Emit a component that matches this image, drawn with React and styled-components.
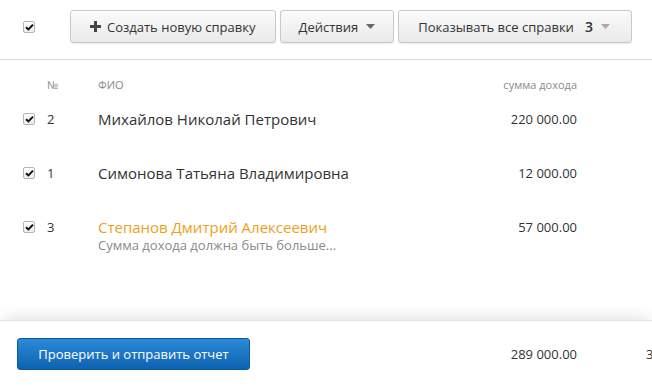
import React from "react";
import styled, { createGlobalStyle } from "styled-components";

const GlobalStyle = createGlobalStyle`
  html, body {
    margin: 0;
    padding: 0;
    background: #fff;
  }
  body {
    font-family: "Open Sans", "Noto Sans", sans-serif;
    color: #333;
  }
`;

const rows = [
  { id: 2, name: "Михайлов Николай Петрович", amount: "220 000.00" },
  { id: 1, name: "Симонова Татьяна Владимировна", amount: "12 000.00" },
  {
    id: 3,
    name: "Степанов Дмитрий Алексеевич",
    amount: "57 000.00",
    warning: "Сумма дохода должна быть больше..."
  }
];

function Check() {
  return (
    <CheckBox>
      <svg width="9" height="8" viewBox="0 0 9 8">
        <path d="M1 4.2 L3.4 6.4 L8 1.6" fill="none" stroke="#111" strokeWidth="2" />
      </svg>
    </CheckBox>
  );
}

function Caret({ light }) {
  return (
    <svg width="9" height="5" viewBox="0 0 9 5" style={{ marginLeft: 8 }}>
      <path d="M0 0 H9 L4.5 5 Z" fill={light ? "#aaa" : "#666"} />
    </svg>
  );
}

export default function App() {
  return (
    <>
      <GlobalStyle />
      <Page>
        <Toolbar>
          <Check />
          <Buttons>
            <Button $pad="0 19px">
              <svg width="11" height="11" viewBox="0 0 11 11" style={{ marginRight: 6 }}>
                <path d="M4 0 H7 V4 H11 V7 H7 V11 H4 V7 H0 V4 H4 Z" fill="#444" />
              </svg>
              Создать новую справку
            </Button>
            <Button $pad="0 18px">
              Действия
              <Caret />
            </Button>
            <Button $pad="0 21px 0 19px">
              Показывать все справки
              <Count>3</Count>
              <Caret light />
            </Button>
          </Buttons>
        </Toolbar>

        <HeaderRow>
          <span />
          <HeadCell>№</HeadCell>
          <HeadCell>ФИО</HeadCell>
          <HeadCell $right>сумма дохода</HeadCell>
          <span />
        </HeaderRow>

        {rows.map((r) => (
          <Row key={r.id}>
            <CheckCell>
              <Check />
            </CheckCell>
            <Num>{r.id}</Num>
            <div>
              <Name $warn={!!r.warning}>{r.name}</Name>
              {r.warning && <Hint>{r.warning}</Hint>}
            </div>
            <Amount>{r.amount}</Amount>
            <span />
          </Row>
        ))}

        <Spacer />

        <Footer>
          <PrimaryButton>Проверить и отправить отчет</PrimaryButton>
          <Amount>289 000.00</Amount>
          <Total>3</Total>
        </Footer>
      </Page>
    </>
  );
}

const Page = styled.div`
  height: 100vh;
  display: flex;
  flex-direction: column;
  overflow: hidden;
`;

const Toolbar = styled.div`
  display: flex;
  align-items: center;
  height: 60px;
  padding: 0 0 6px 23px;
  box-sizing: border-box;
  border-bottom: 1px solid #dcdcdc;
`;

const Buttons = styled.div`
  display: flex;
  gap: 4px;
  margin-left: 35px;
`;

const Button = styled.button`
  display: flex;
  align-items: center;
  height: 33px;
  padding: ${(p) => p.$pad};
  border: 1px solid #c9c9c9;
  border-radius: 3px;
  background: linear-gradient(#fbfbfb, #e9e9e9);
  box-shadow: 0 1px 1px rgba(0, 0, 0, 0.08);
  font-family: inherit;
  font-size: 13px;
  color: #333;
  white-space: nowrap;
`;

const Count = styled.span`
  margin-left: 11px;
  font-weight: 600;
  font-size: 14px;
`;

const CheckBox = styled.span`
  display: inline-flex;
  align-items: center;
  justify-content: center;
  width: 12px;
  height: 12px;
  box-sizing: border-box;
  border: 1px solid #b5b5b5;
  border-radius: 2px;
  background: linear-gradient(#fff, #ececec);
`;

const grid = `
  display: grid;
  grid-template-columns: 47px 51px 1fr 100px 75px;
`;

const HeaderRow = styled.div`
  ${grid}
  padding-top: 17px;
  height: 49px;
  box-sizing: border-box;
`;

const HeadCell = styled.span`
  font-size: 11px;
  line-height: 16px;
  color: #8a8a8a;
  text-align: ${(p) => (p.$right ? "right" : "left")};
`;

const Row = styled.div`
  ${grid}
  height: 54px;
  align-items: start;
`;

const CheckCell = styled.div`
  padding: 4px 0 0 23px;
  line-height: 0;
`;

const Num = styled.span`
  font-size: 13px;
  line-height: 20px;
  color: #333;
`;

const Name = styled.div`
  font-size: 15px;
  line-height: 20px;
  color: ${(p) => (p.$warn ? "#f0a020" : "#333")};
`;

const Hint = styled.div`
  font-size: 13px;
  line-height: 17px;
  color: #8a8a8a;
`;

const Amount = styled.span`
  font-size: 13px;
  line-height: 20px;
  text-align: right;
  color: #333;
`;

const Spacer = styled.div`
  flex: 1;
`;

const Footer = styled.div`
  display: grid;
  grid-template-columns: 98px 1fr 100px 75px;
  align-items: center;
  height: 66px;
  box-sizing: border-box;
  border-top: 1px solid #e2e2e2;
  box-shadow: 0 -6px 14px -4px rgba(0, 0, 0, 0.13);
  background: #fff;
`;

const PrimaryButton = styled.button`
  grid-column: 1 / 3;
  justify-self: start;
  margin-left: 17px;
  width: 233px;
  height: 32px;
  border: 1px solid #0c5a9e;
  border-radius: 3px;
  background: linear-gradient(#2b8ad8, #0e62b0);
  color: #fff;
  font-family: inherit;
  font-size: 13px;
`;

const Total = styled.span`
  font-size: 13px;
  padding-left: 69px;
  white-space: nowrap;
`;
